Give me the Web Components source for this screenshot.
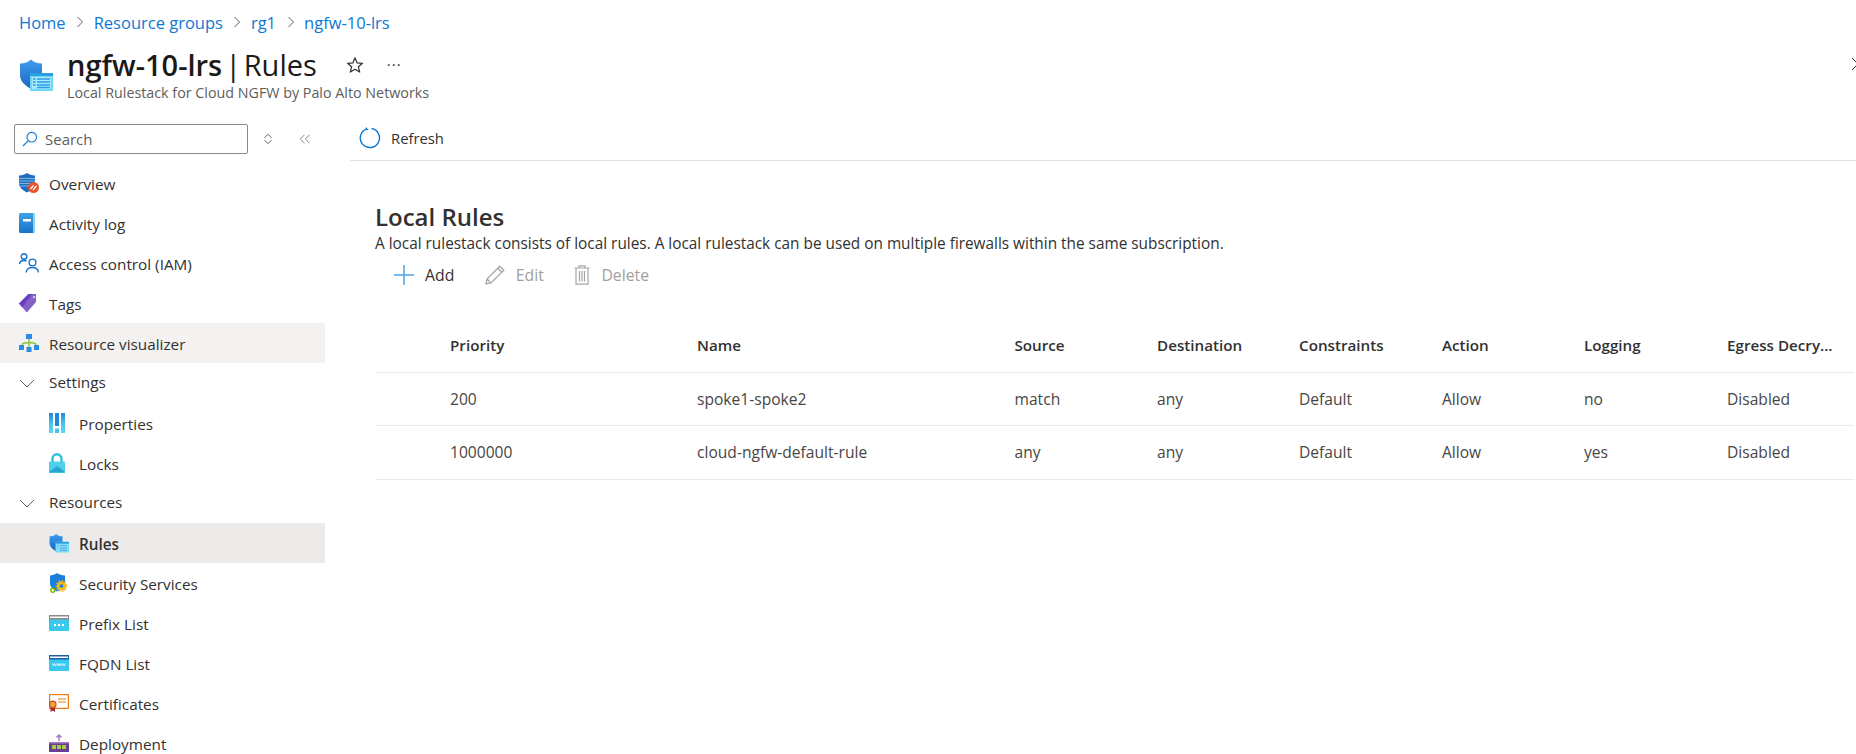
<!DOCTYPE html>
<html>
<head>
<meta charset="utf-8">
<title>ngfw-10-lrs | Rules</title>
<style>
    html, body { margin: 0; height: 754px; overflow: hidden; background: #fff; }
    body { font-family: "Open Sans", "Liberation Sans", sans-serif; color: #323130; }
</style>
</head>
<body>
<azure-page></azure-page>
<script>
"use strict";
/* [ icons ]
=================================== */
const icons = {
    shieldList: `<svg width="34" height="34" viewBox="0 0 34 34"><defs><linearGradient id="sh" x1="0" y1="0" x2="0" y2="1"><stop offset="0" stop-color="#3f9cf0"/><stop offset="1" stop-color="#1768bd"/></linearGradient></defs><path d="M1 5.500 C6 5.500 9 4 12 1.500 C15 4 18 5.500 23 5.500 V17 C23 24 17 28 12 31 C7 28 1 24 1 17Z" fill="url(#sh)"/><rect x="11" y="15" width="23" height="18" fill="#6fd6f7"/><rect x="11" y="15" width="23" height="3" fill="#2d9fe0"/><rect x="13" y="19" width="19" height="12" fill="#a3e9fc"/><path d="M18 21h13M18 24h13M18 27h13M18 29.500h13M14 21h2.500M14 24h2.500M14 27h2.500" stroke="#2f9be0" stroke-width="1.300"/></svg>`,
    star: `<svg width="18" height="18" viewBox="0 0 18 18"><path d="M9 1.800 L11.100 6.900 L16.500 7.300 L12.400 10.800 L13.700 16.100 L9 13.300 L4.300 16.100 L5.600 10.800 L1.500 7.300 L6.900 6.900Z" fill="none" stroke="#323130" stroke-width="1.200" stroke-linejoin="round"/></svg>`,
    search: `<svg width="16" height="16" viewBox="0 0 16 16"><circle cx="9.800" cy="6.200" r="4.800" fill="none" stroke="#0f78d4" stroke-width="1.100"/><path d="M6.300 9.600 L1 15" stroke="#0f78d4" stroke-width="1.200"/></svg>`,
    updown: `<svg width="10" height="12" viewBox="0 0 10 12"><path d="M1.500 4.800 L5 1.300 L8.500 4.800M1.500 7.200 L5 10.700 L8.500 7.200" fill="none" stroke="#605e5c" stroke-width="1"/></svg>`,
    collapse: `<svg width="12" height="10" viewBox="0 0 12 10"><path d="M5.500 .8 L1.300 5 L5.500 9.200M10.500 .8 L6.300 5 L10.500 9.200" fill="none" stroke="#8a8886" stroke-width="1"/></svg>`,
    refresh: `<svg width="22" height="22" viewBox="0 0 22 22"><path d="M7.200 2.100 A9.600 9.600 0 1 0 12.500 1.500" fill="none" stroke="#0f78d4" stroke-width="1.400"/><path d="M7.400 .6 V2.300 H9.200" fill="none" stroke="#0f78d4" stroke-width="1.200"/></svg>`,
    plus: `<svg width="20" height="20" viewBox="0 0 20 20"><path d="M10 0V20M0 10H20" stroke="#4fa3e3" stroke-width="1.500"/></svg>`,
    edit: `<svg width="20" height="20" viewBox="0 0 20 20"><path d="M14.800 1.200 L18.800 5.200 L6 18 L1 19 L2 14Z M12.800 3.300 L16.700 7.200 M2 14 L6 18" fill="none" stroke="#a6a6a6" stroke-width="1.300"/></svg>`,
    trash: `<svg width="16" height="20" viewBox="0 0 16 20"><path d="M.5 3H15.500M5 3V.8H11V3M2 3V19.200H14V3M5.500 6V16.500M8 6V16.500M10.500 6V16.500" fill="none" stroke="#a6a6a6" stroke-width="1.200"/></svg>`,
    chevron: `<svg width="16" height="9" viewBox="0 0 16 9"><path d="M1 1 L8 8 L15 1" fill="none" stroke="#605e5c" stroke-width="1"/></svg>`,
    overview: `<svg width="20" height="20" viewBox="0 0 20 20"><path d="M0 2.500 C3 2.500 6 1.500 8 0 C10 1.500 13 2.500 16 2.500 V10 C16 14.500 12 17.500 8 19.500 C4 17.500 0 14.500 0 10Z" fill="#1f6fbf"/><path d="M0 5.500H16M0 8H16M.3 10.500H16M1.500 13H15" stroke="#9cc7ee" stroke-width=".8"/><circle cx="14.500" cy="14.500" r="5.500" fill="#e8552b"/><path d="M11.500 16 L14.500 12.500M14 17 L17.500 13" stroke="#fff" stroke-width="1.200"/></svg>`,
    book: `<svg width="16" height="20" viewBox="0 0 16 20"><defs><linearGradient id="bk" x1="0" y1="0" x2="0" y2="1"><stop offset="0" stop-color="#3f9fe8"/><stop offset="1" stop-color="#1574c9"/></linearGradient></defs><rect width="16" height="20" rx="1.500" fill="url(#bk)"/><rect x="14" width="2" height="20" fill="#8fd0f5"/><rect x="4" y="6" width="8" height="2.500" fill="#fff"/></svg>`,
    users: `<svg width="20" height="20" viewBox="0 0 20 20"><g fill="none" stroke="#1a74cc" stroke-width="1.400"><circle cx="5" cy="3.500" r="2.800"/><path d="M.5 11 C1 8.500 3 7.500 5 7.500 C6 7.500 7 7.700 7.500 8.200"/><circle cx="13.500" cy="9.500" r="3.400"/><path d="M7 19.500 C7.500 16 10 14.500 13.500 14.500 C17 14.500 19 16 19.500 19.500"/></g></svg>`,
    tag: `<svg width="19" height="20" viewBox="0 0 19 20"><path d="M0 10.500 L9.500 1 H17 V9 L7.800 19.500Z" fill="#8661c5"/><path d="M0 10.500 L9.500 1 H13 L3.500 14.500Z" fill="#6b3fc2"/><circle cx="15" cy="4" r="1.500" fill="#e4d8f5" stroke="#6b3fc2" stroke-width=".5"/></svg>`,
    tree: `<svg width="20" height="18" viewBox="0 0 20 18"><path d="M10 5V14M3 11 C3 9 6 8.500 10 8.500 C14 8.500 17 9 17 11" fill="none" stroke="#8cc63f" stroke-width="1.500"/><rect x="7" y="0" width="6" height="5" fill="#2d8be6"/><rect x="0" y="11" width="5" height="5" fill="#2d8be6"/><rect x="15" y="11" width="5" height="5" fill="#2d8be6"/><rect x="7.500" y="13" width="5" height="5" fill="#2d8be6"/></svg>`,
    props: `<svg width="16" height="20" viewBox="0 0 16 20"><defs><linearGradient id="pr" x1="0" y1="0" x2="0" y2="1"><stop offset="0" stop-color="#1f86d8"/><stop offset=".5" stop-color="#45c4ea"/><stop offset="1" stop-color="#5fd6f2"/></linearGradient></defs><rect width="4" height="20" fill="url(#pr)"/><rect x="6" width="4" height="13" fill="#1f86d8"/><rect x="6" y="15.500" width="4" height="4.500" fill="#45c4ea"/><rect x="12" width="4" height="20" fill="url(#pr)"/></svg>`,
    lock: `<svg width="16" height="20" viewBox="0 0 16 20"><path d="M3.500 9V5.800 A4.500 4.500 0 0 1 12.500 5.800V9" fill="none" stroke="#32bedd" stroke-width="2.400"/><rect y="8.500" width="16" height="11.500" rx="1" fill="#50d0ea"/><path d="M0 19 L8 13 L16 19 V19.500 H0Z" fill="#2aa5cf"/></svg>`,
    gearShield: `<svg width="18" height="20" viewBox="0 0 18 20"><path d="M1 2.500 C3.500 2.500 6 1.500 8 0 C10 1.500 13 2.500 16 2.500 V10 C16 14 12 16.500 8 18.500 C4 16.500 1 14 1 10Z" fill="#1b7fdc"/><circle cx="12.500" cy="13" r="4.500" fill="#f5b81f"/><circle cx="12.500" cy="13" r="5.200" fill="none" stroke="#f5b81f" stroke-width="1.500" stroke-dasharray="1.500 1.500"/><circle cx="12.500" cy="13" r="1.800" fill="#1b7fdc"/><circle cx="3.800" cy="17.300" r="2" fill="none" stroke="#7fba00" stroke-width="1.500"/></svg>`,
    prefix: `<svg width="20" height="16" viewBox="0 0 20 16"><rect width="20" height="16" rx="1" fill="#3bc8ef"/><rect width="20" height="4.500" fill="#8a8a8a"/><rect x="1" y="1.500" width="18" height="1.500" fill="#fff"/><circle cx="6" cy="10" r="1.200" fill="#fff"/><circle cx="10" cy="10" r="1.200" fill="#fff"/><circle cx="14" cy="10" r="1.200" fill="#fff"/></svg>`,
    fqdn: `<svg width="20" height="16" viewBox="0 0 20 16"><rect width="20" height="16" rx="1" fill="#3bc8ef"/><rect width="20" height="4.500" fill="#1a5fa8"/><rect x="1" y="1.500" width="18" height="1.500" fill="#fff"/><path d="M3.500 8.500 L4.500 11 L5.500 8.500 L6.500 11 L7.500 8.500 M8 8.500 L9 11 L10 8.500 L11 11 L12 8.500 M12.500 8.500 L13.500 11 L14.500 8.500 L15.500 11 L16.500 8.500" fill="none" stroke="#e8f8fd" stroke-width=".8"/></svg>`,
    cert: `<svg width="20" height="18" viewBox="0 0 20 18"><rect x=".6" y=".6" width="18.800" height="13.800" fill="#fff" stroke="#f07c13" stroke-width="1.200"/><path d="M9 5H17M9 8H17" stroke="#f07c13" stroke-width="1"/><path d="M1.500 12 H6 V18 L3.700 16.500 L1.500 18Z" fill="#a4262c"/><circle cx="3.700" cy="10.500" r="3.300" fill="#f2a33a" stroke="#d1432b" stroke-width="1.200"/></svg>`,
    deploy: `<svg width="20" height="18" viewBox="0 0 20 18"><path d="M10 7V1M7.500 3.500 L10 1 L12.500 3.500" fill="none" stroke="#a67bc5" stroke-width="1.500"/><rect y="8" width="20" height="10" fill="#6b3f8f"/><rect y="8" width="20" height="1.500" fill="#a67bc5"/><rect x="3" y="11" width="4" height="4" fill="#a9c94a"/><rect x="8" y="11" width="4" height="4" fill="#a9c94a"/><rect x="13" y="11" width="4" height="4" fill="#a9c94a"/></svg>`
};

/* [ breadcrumb ]
=================================== */
class AzBreadcrumb extends HTMLElement {
    constructor() {
        super();
        const crumbs = [ "Home", "Resource groups", "rg1", "ngfw-10-lrs" ];
        this.attachShadow( { mode: "open" } ).innerHTML = `
<style>
    :host { box-sizing: border-box; display: flex; align-items: center; height: 46px; padding: 0 0 2px 19px; font-size: 16.500px; color: #0f78d4; }
    svg { margin: 0 9.500px 0 10.500px; }
</style>
${ crumbs.map( c => `<span>${c}</span>` ).join( `<svg width="8" height="12" viewBox="0 0 8 12"><path d="M1.500 1 L6.500 6 L1.500 11" fill="none" stroke="#605e5c" stroke-width="1"/></svg>` ) }`;
    }
}
customElements.define( "az-breadcrumb", AzBreadcrumb );

/* [ title block ]
=================================== */
class AzTitle extends HTMLElement {
    constructor() {
        super();
        this.attachShadow( { mode: "open" } ).innerHTML = `
<style>
    :host { display: flex; height: 70px; padding-left: 19px; position: relative; }
    .ico { width: 48px; padding-top: 12px; }
    .main { display: flex; align-items: center; height: 37px; }
    h1 { margin: 0; font-size: 29px; font-weight: 400; line-height: 36px; color: #1b1a19; white-space: nowrap; word-spacing: -3px; }
    h1 b { font-weight: 600; word-spacing: 0; margin-right: -1.500px; }
    h1 i { font-style: normal; margin-right: -2px; }
    .star { margin-left: 29px; display: flex; }
    .more { margin-left: 23px; font-size: 15px; letter-spacing: 1px; line-height: 1; }
    p { margin: 0; font-size: 14.300px; line-height: 20px; color: #605e5c; }
    .close { position: absolute; right: -11px; top: 11px; }
</style>
<div class="ico">${icons.shieldList}</div>
<div>
    <div class="main"><h1><b>ngfw-10-lrs</b> <i>|</i> Rules</h1><span class="star">${icons.star}</span><span class="more">···</span></div>
    <p>Local Rulestack for Cloud NGFW by Palo Alto Networks</p>
</div>
<svg class="close" width="16" height="14" viewBox="0 0 16 14"><path d="M1 1 L13 13 M13 1 L1 13" fill="none" stroke="#323130" stroke-width="1"/></svg>`;
    }
}
customElements.define( "az-title", AzTitle );

/* [ sidebar item ]
=================================== */
class NavItem extends HTMLElement {
    constructor() {
        super();
        this.attachShadow( { mode: "open" } ).innerHTML = `
<style>
    :host { display: flex; align-items: center; height: 40px; padding-left: 19px; font-size: 15.300px; color: #323130; white-space: nowrap; }
    :host( [sub] ) { padding-left: 49px; }
    :host( [hover] ) { background: #f3f2f1; }
    :host( [active] ) { background: #edebe9; font-weight: 600; }
    .ico { width: 30px; display: flex; align-items: center; }
    :host( [active] ) svg { width: 20px; height: 20px; }
    .txt { padding-top: 1px; }
    :host( [group] ) .txt { padding: 0 0 2px; }
</style>
<span class="ico"></span><span class="txt"><slot></slot></span>`;
    }
    connectedCallback() {
        this.shadowRoot.querySelector( ".ico" ).innerHTML = icons[ this.getAttribute( "icon" ) ] || "";
    }
}
customElements.define( "nav-item", NavItem );

/* [ sidebar ]
=================================== */
class SideNav extends HTMLElement {
    constructor() {
        super();
        this.attachShadow( { mode: "open" } ).innerHTML = `
<style>
    :host { display: block; width: 325px; flex: none; overflow: hidden; }
    .search-row { display: flex; align-items: center; height: 46px; padding: 0 0 0 14px; }
    .search { box-sizing: border-box; width: 234px; height: 30px; border: 1px solid #8a8886; border-radius: 2px; display: flex; align-items: center; gap: 7px; padding-left: 7px; font-size: 15px; color: #605e5c; }
    .btn1 { margin-left: 15px; display: flex; }
    .btn2 { margin-left: 26px; display: flex; }
    .list { padding-top: 1px; }
</style>
<div class="search-row">
    <div class="search">${icons.search}<span>Search</span></div>
    <span class="btn1">${icons.updown}</span>
    <span class="btn2">${icons.collapse}</span>
</div>
<div class="list"><slot></slot></div>`;
    }
}
customElements.define( "side-nav", SideNav );

/* [ command button ]
=================================== */
class CmdBtn extends HTMLElement {
    constructor() {
        super();
        this.attachShadow( { mode: "open" } ).innerHTML = `
<style>
    :host { display: flex; align-items: center; gap: 11px; font-size: 15.800px; color: #323130; white-space: nowrap; }
    :host( [disabled] ) { color: #a19f9d; }
    .ico { display: flex; }
</style>
<span class="ico"></span><slot></slot>`;
    }
    connectedCallback() {
        this.shadowRoot.querySelector( ".ico" ).innerHTML = icons[ this.getAttribute( "icon" ) ];
    }
}
customElements.define( "cmd-btn", CmdBtn );

/* [ rules table ]
=================================== */
class RulesTable extends HTMLElement {
    constructor() {
        super();
        const heads = [ "Priority", "Name", "Source", "Destination", "Constraints", "Action", "Logging", "Egress Decry..." ],
            rows = [
                [ "200", "spoke1-spoke2", "match", "any", "Default", "Allow", "no", "Disabled" ],
                [ "1000000", "cloud-ngfw-default-rule", "any", "any", "Default", "Allow", "yes", "Disabled" ]
            ];
        const cells = r => `<span></span>` + r.map( c => `<span>${c}</span>` ).join( "" );
        this.attachShadow( { mode: "open" } ).innerHTML = `
<style>
    :host { display: block; font-size: 15.600px; margin-right: 2px; }
    .row { box-sizing: border-box; display: grid; grid-template-columns: 75px 247px 317.500px 142.500px 142px 143px 142px 143px 1fr; height: 53.500px; align-items: center; border-bottom: 1px solid #edebe9; color: #484644; white-space: nowrap; }
    .head { height: 59.500px; padding-top: 6px; font-size: 15.200px; font-weight: 600; color: #323130; }
</style>
<div class="row head">${ cells( heads ) }</div>
${ rows.map( r => `<div class="row">${ cells( r ) }</div>` ).join( "" ) }`;
    }
}
customElements.define( "rules-table", RulesTable );

/* [ rules blade ]
=================================== */
class RulesBlade extends HTMLElement {
    constructor() {
        super();
        this.attachShadow( { mode: "open" } ).innerHTML = `
<style>
    :host { display: block; flex: 1; min-width: 0; padding-left: 25px; }
    .bar { box-sizing: border-box; height: 45px; border-bottom: 1px solid #dfe3ea; display: flex; align-items: center; padding-left: 9px; }
    .bar cmd-btn { font-size: 14.800px; gap: 10px; }
    .body { padding: 40px 0 0 25px; }
    h2 { margin: 0; font-size: 24px; line-height: 32px; font-weight: 600; color: #323130; }
    p { margin: 0; font-size: 15.360px; line-height: 22px; color: #323130; }
    .actions { display: flex; align-items: center; gap: 30.500px; height: 40px; padding-left: 19px; margin-bottom: 18px; }
</style>
<div class="bar"><cmd-btn icon="refresh">Refresh</cmd-btn></div>
<div class="body">
    <h2>Local Rules</h2>
    <p>A local rulestack consists of local rules. A local rulestack can be used on multiple firewalls within the same subscription.</p>
    <div class="actions">
        <cmd-btn icon="plus">Add</cmd-btn>
        <cmd-btn icon="edit" disabled>Edit</cmd-btn>
        <cmd-btn icon="trash" disabled>Delete</cmd-btn>
    </div>
    <rules-table></rules-table>
</div>`;
    }
}
customElements.define( "rules-blade", RulesBlade );

/* [ page ]
=================================== */
class AzurePage extends HTMLElement {
    constructor() {
        super();
        this.attachShadow( { mode: "open" } ).innerHTML = `
<style>
    :host { display: block; height: 754px; overflow: hidden; }
    .cols { display: flex; }
</style>
<az-breadcrumb></az-breadcrumb>
<az-title></az-title>
<div class="cols">
    <side-nav>
        <nav-item icon="overview">Overview</nav-item>
        <nav-item icon="book">Activity log</nav-item>
        <nav-item icon="users">Access control (IAM)</nav-item>
        <nav-item icon="tag">Tags</nav-item>
        <nav-item icon="tree" hover>Resource visualizer</nav-item>
        <nav-item icon="chevron" group>Settings</nav-item>
        <nav-item icon="props" sub>Properties</nav-item>
        <nav-item icon="lock" sub>Locks</nav-item>
        <nav-item icon="chevron" group>Resources</nav-item>
        <nav-item icon="shieldList" sub active>Rules</nav-item>
        <nav-item icon="gearShield" sub>Security Services</nav-item>
        <nav-item icon="prefix" sub>Prefix List</nav-item>
        <nav-item icon="fqdn" sub>FQDN List</nav-item>
        <nav-item icon="cert" sub>Certificates</nav-item>
        <nav-item icon="deploy" sub>Deployment</nav-item>
    </side-nav>
    <rules-blade></rules-blade>
</div>`;
    }
}
customElements.define( "azure-page", AzurePage );
</script>
</body>
</html>
